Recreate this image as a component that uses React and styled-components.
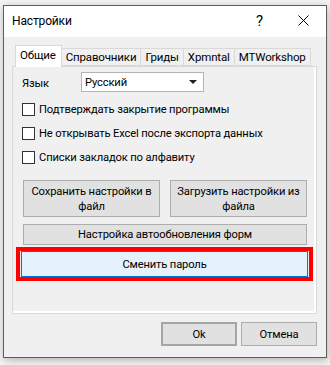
import React from "react";
import styled, { createGlobalStyle } from "styled-components";

const Global = createGlobalStyle`
  html, body { margin: 0; padding: 0; background: #f4f4f4; }
  body { font-family: Roboto, "Liberation Sans", Arial, sans-serif; font-size: 11.2px; letter-spacing: -0.15px; color: #000; }
  * { box-sizing: border-box; }
`;

const Page = styled.div`
  width: 330px;
  height: 365px;
  padding: 5px 0 0 3px;
`;

const Window = styled.div`
  width: 324px;
  height: 353px;
  border: 1px solid #5e5e5e;
  background: #f0f0f0;
  box-shadow: 1px 2px 8px rgba(0, 0, 0, 0.28);
  display: flex;
  flex-direction: column;
`;

const TitleBar = styled.div`
  height: 31px;
  background: #fff;
  display: flex;
  align-items: center;
  padding-left: 8px;
`;

const Title = styled.div`
  flex: 1;
  font-size: 12px;
  margin-top: -2px;
`;

const Help = styled.div`
  width: 46px;
  text-align: center;
  font-size: 15px;
  margin-top: -2px;
  padding-left: 5px;
`;

const Close = styled.div`
  width: 46px;
  height: 31px;
  display: flex;
  align-items: center;
  justify-content: center;
  padding-bottom: 2px;
`;

const Body = styled.div`
  flex: 1;
  padding: 8px 9px 0 8px;
  display: flex;
  flex-direction: column;
`;

const Tabs = styled.div`
  display: flex;
  align-items: flex-end;
  padding-left: 3px;
  height: 21px;
  position: relative;
  z-index: 1;
`;

const Tab = styled.div`
  height: ${(p) => (p.$active ? "22px" : "18px")};
  padding: ${(p) => (p.$active ? "2px 5px 0 4px" : "1px 4px 0 4px")};
  margin-bottom: ${(p) => (p.$active ? "-1px" : "0")};
  border: 1px solid #d9d9d9;
  border-bottom: ${(p) => (p.$active ? "none" : "1px solid #d9d9d9")};
  border-left: ${(p) => (p.$first || p.$active ? "1px solid #d9d9d9" : "none")};
  background: ${(p) => (p.$active ? "#fff" : "#f0f0f0")};
  white-space: nowrap;
  line-height: 15px;
  font-size: 11.5px;
`;

const Panel = styled.div`
  height: 248px;
  border: 1px solid #d9d9d9;
  box-shadow: inset -2px -2px 0 #fff;
  background: #f0f0f0;
  padding: 5px 9px 0 9px;
  display: flex;
  flex-direction: column;
`;

const LangRow = styled.div`
  display: flex;
  align-items: center;
  height: 20px;
`;

const Label = styled.div`
  width: 59px;
  padding-top: 3px;
`;

const Select = styled.div`
  width: 123px;
  height: 20px;
  background: #fff;
  border: 1px solid #b4b4b4;
  display: flex;
  align-items: center;
  justify-content: space-between;
  padding: 0 6px 0 3px;
`;

const Arrow = styled.div`
  width: 0;
  height: 0;
  border-left: 4px solid transparent;
  border-right: 4px solid transparent;
  border-top: 4px solid #202020;
`;

const Checks = styled.div`
  margin-top: 5px;
  display: flex;
  flex-direction: column;
`;

const CheckRow = styled.div`
  height: 24px;
  display: flex;
  align-items: center;
`;

const Box = styled.div`
  width: 13px;
  height: 13px;
  background: #fff;
  border: 1px solid #333;
  margin-right: 4px;
`;

const BtnRow = styled.div`
  margin-top: 11px;
  display: flex;
  gap: 10px;
  padding-left: 1px;
`;

const Button = styled.div`
  width: ${(p) => p.$w || "auto"};
  flex: ${(p) => (p.$w ? "none" : "1")};
  height: ${(p) => p.$h || "21px"};
  background: ${(p) => (p.$focus ? "#e5f1fb" : "#e1e1e1")};
  border: ${(p) => (p.$default ? "2px solid #a6a6a6" : p.$focus ? "1px solid #0078d7" : "1px solid #adadad")};
  display: flex;
  align-items: center;
  justify-content: center;
  text-align: center;
  line-height: 15px;
  padding: 0 2px;
  white-space: nowrap;
`;

const Wide = styled(Button)`
  margin: 7px 0 0 1px;
  flex: none;
`;

const Highlight = styled.div`
  margin: 2px -6px 0 -6px;
  border: 4px solid #ff0000;
  padding: 0 1px;
  height: 34px;
  display: flex;
  flex-direction: column;
  justify-content: center;
`;

const Footer = styled.div`
  display: flex;
  justify-content: flex-end;
  gap: 4px;
  margin-top: 8px;
`;

export default function App() {
  return (
    <Page>
      <Global />
      <Window>
        <TitleBar>
          <Title>Настройки</Title>
          <Help>?</Help>
          <Close>
            <svg width="11" height="11" viewBox="0 0 11 11">
              <path d="M0.5 0.5 L10.5 10.5 M10.5 0.5 L0.5 10.5" stroke="#000" strokeWidth="1" />
            </svg>
          </Close>
        </TitleBar>
        <Body>
          <Tabs>
            <Tab $active $first>Общие</Tab>
            <Tab>Справочники</Tab>
            <Tab>Гриды</Tab>
            <Tab>Xpmntal</Tab>
            <Tab>MTWorkshop</Tab>
          </Tabs>
          <Panel>
            <LangRow>
              <Label>Язык</Label>
              <Select>
                <span>Русский</span>
                <Arrow />
              </Select>
            </LangRow>
            <Checks>
              <CheckRow><Box />Подтверждать закрытие программы</CheckRow>
              <CheckRow><Box />Не открывать Excel после экспорта данных</CheckRow>
              <CheckRow><Box />Списки закладок по алфавиту</CheckRow>
            </Checks>
            <BtnRow>
              <Button $h="37px">Сохранить настройки в<br />файл</Button>
              <Button $h="37px">Загрузить настройки из<br />файла</Button>
            </BtnRow>
            <Wide $h="21px">Настройка автообновления форм</Wide>
            <Highlight>
              <Button $focus $h="24px">Сменить пароль</Button>
            </Highlight>
          </Panel>
          <Footer>
            <Button $w="76px" $h="24px" $default>Ok</Button>
            <Button $w="76px" $h="24px">Отмена</Button>
          </Footer>
        </Body>
      </Window>
    </Page>
  );
}
